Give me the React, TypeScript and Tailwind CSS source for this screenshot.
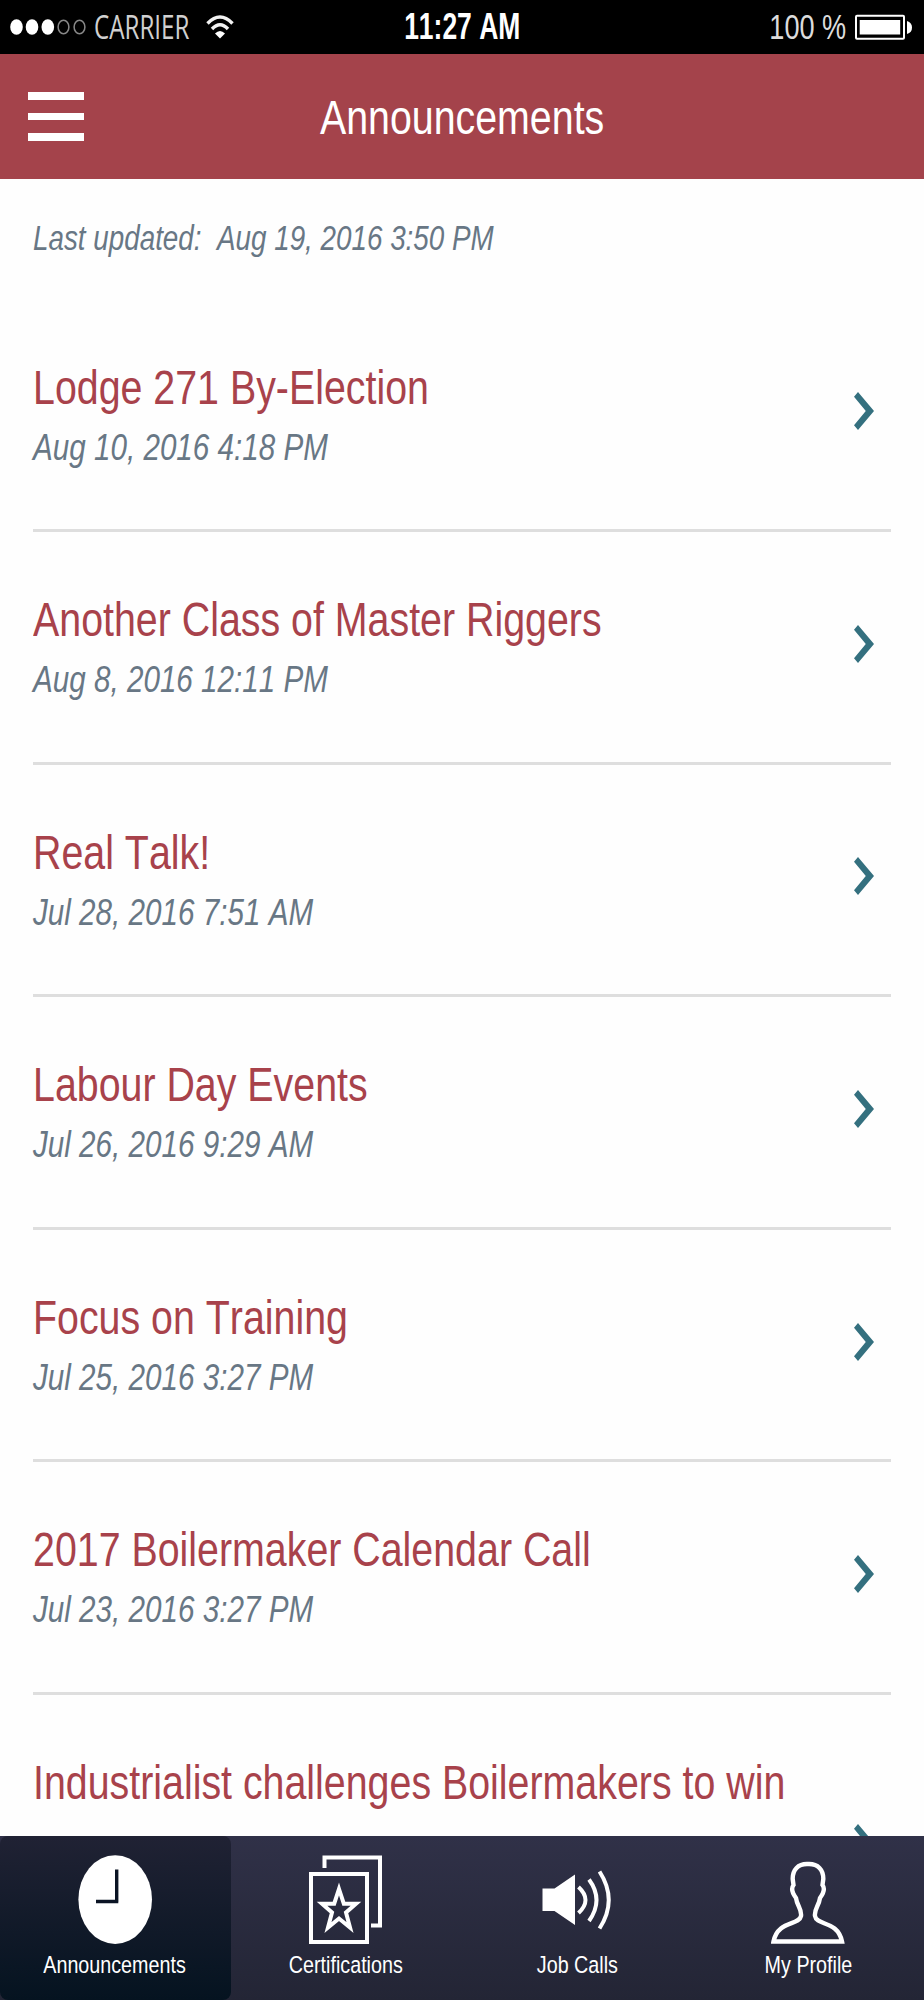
import React from 'react';

interface Announcement {
  title: string;
  date: string;
  multiline?: boolean;
}

const announcements: Announcement[] = [
  { title: 'Lodge 271 By-Election', date: 'Aug 10, 2016 4:18 PM' },
  { title: 'Another Class of Master Riggers', date: 'Aug 8, 2016 12:11 PM' },
  { title: 'Real Talk!', date: 'Jul 28, 2016 7:51 AM' },
  { title: 'Labour Day Events', date: 'Jul 26, 2016 9:29 AM' },
  { title: 'Focus on Training', date: 'Jul 25, 2016 3:27 PM' },
  { title: '2017 Boilermaker Calendar Call', date: 'Jul 23, 2016 3:27 PM' },
  { title: 'Industrialist challenges Boilermakers to win', date: '', multiline: true },
];

const StatusBar: React.FC = () => (
  <div className="h-[54px] shrink-0 bg-black grid grid-cols-3 items-center text-white">
    <div className="flex items-center pl-[10px]">
      <svg width="78" height="20" viewBox="0 0 78 20" className="shrink-0">
        <ellipse cx="6.5" cy="10" rx="6.3" ry="7.8" fill="#fff" />
        <ellipse cx="22" cy="10" rx="6.3" ry="7.8" fill="#fff" />
        <ellipse cx="37.8" cy="10" rx="6.3" ry="7.8" fill="#fff" />
        <ellipse cx="53.5" cy="10" rx="5.4" ry="6.8" fill="none" stroke="#888" strokeWidth="1.5" />
        <ellipse cx="69.5" cy="10" rx="5.4" ry="6.8" fill="none" stroke="#888" strokeWidth="1.5" />
      </svg>
      <div className="w-[112px] ml-[6px]">
        <span className="inline-block whitespace-nowrap origin-left scale-x-[0.755] font-['Open_Sans'] text-[32px] leading-[40px] text-[#d0d0d0]">CARRIER</span>
      </div>
      <svg width="28" height="26" viewBox="0 0 28 26" className="shrink-0" fill="none" stroke="#f2f2f2" strokeWidth="3.4">
        <path d="M1.5 9.5Q14 -3.5 26.5 9.5" />
        <path d="M6 15Q14 6.5 22 15" />
        <path d="M9 19.5Q14 14.5 19 19.5L14 24.5Z" fill="#fff" stroke="none" />
      </svg>
    </div>
    <div className="flex justify-center">
      <span className="whitespace-nowrap scale-x-[0.715] font-bold text-[37px] leading-[44px]">11:27 AM</span>
    </div>
    <div className="flex items-center justify-end pr-[12px]">
      <span className="whitespace-nowrap origin-right scale-x-[0.775] mr-[9px] text-[35px] leading-[44px] text-[#dcdcdc]">100 %</span>
      <svg width="57" height="26" viewBox="0 0 57 26">
        <rect x="1" y="1.7" width="48" height="23" rx="1" fill="none" stroke="#fff" strokeWidth="2" />
        <rect x="4.7" y="6" width="40.5" height="14.5" fill="#fff" />
        <path d="M52 7Q57 8.5 57 13.5Q57 18.5 52 20Z" fill="#fff" />
      </svg>
    </div>
  </div>
);

const Header: React.FC = () => (
  <header className="h-[124.5px] shrink-0 bg-[#a4434b] grid grid-cols-3 items-center">
    <button className="ml-7 w-14 flex flex-col gap-[13px]">
      <span className="h-[7.5px] bg-white" />
      <span className="h-[7.5px] bg-white" />
      <span className="h-[7.5px] bg-white" />
    </button>
    <h1 className="flex justify-center pt-px">
      <span className="whitespace-nowrap scale-x-[0.803] text-white text-[49px] leading-[56px]">Announcements</span>
    </h1>
  </header>
);

const AnnouncementRow: React.FC<{ item: Announcement }> = ({ item }) => (
  <li className={`${item.multiline ? 'h-[304.6px]' : 'h-[232.6px]'} shrink-0 flex border-b-[3px] border-[#dedede]`}>
    <div className="flex-1 w-0 pt-[59px]">
      <h2 className="w-max origin-left scale-x-[0.803] text-[49px] leading-[56px] text-[#a8424b]">{item.title}</h2>
      <p className="w-max mt-[12px] origin-left scale-x-[0.812] italic text-[36.5px] leading-[42px] text-[#687785]">{item.date}</p>
    </div>
    <svg width="20" height="38" viewBox="0 0 20 38" className="self-center shrink-0 mr-[17px] -mt-[6px]">
      <path d="M4 0L20 19L4 38L0 33.2L11.8 19L0 4.8Z" fill="#34707f" />
    </svg>
  </li>
);

const ClockIcon = () => (
  <svg width="76" height="90" viewBox="0 0 76 90">
    <ellipse cx="38.2" cy="44.6" rx="36.8" ry="44.4" fill="#fff" />
    <path d="M39.7 14.5V47M41.3 46.5H19" stroke="#0b1424" strokeWidth="3.4" />
  </svg>
);

const CertificateIcon = () => (
  <svg width="74" height="90" viewBox="0 0 74 90" fill="none" stroke="#fff">
    <path d="M2 19H58V87H2Z" strokeWidth="4" />
    <path d="M15.5 13V2.5H71V70.5H62" strokeWidth="4" />
    <path d="M30 34L34.8 48.7H47L37 57.5L41 72.5L30 63.5L19 72.5L23 57.5L13 48.7H25.2Z" strokeWidth="4" />
  </svg>
);

const SpeakerIcon = () => (
  <svg width="70" height="90" viewBox="0 0 70 90">
    <path d="M0.5 33.5H12.5L33 19.5V70L12.5 56H0.5Z" fill="#fff" />
    <path d="M36.5 32Q50.5 45 36.5 58M47 24.5Q62 45 47 66M57.5 16.5Q76 45 57.5 73.5" fill="none" stroke="#fff" strokeWidth="4" />
  </svg>
);

const ProfileIcon = () => (
  <svg width="74" height="90" viewBox="0 0 74 90" fill="none" stroke="#fff" strokeWidth="4.4">
    <path d="M37 9C27 8.500 21.500 15 21.700 24L22.500 30C19.500 34 22 39 25 43C26 51 31 54 30 61C28 71 7 65 2.500 86.500H71C66.500 65 45.500 71 44 61C43 54 48 51 49 43C52 39 54.500 34 51.500 30L52.300 24C52.500 15 47 8.500 37 9Z" />
  </svg>
);

const tabs = [
  { label: 'Announcements', icon: <ClockIcon /> },
  { label: 'Certifications', icon: <CertificateIcon /> },
  { label: 'Job Calls', icon: <SpeakerIcon /> },
  { label: 'My Profile', icon: <ProfileIcon /> },
];

const TabBar: React.FC = () => (
  <nav className="h-[164px] shrink-0 grid grid-cols-4 bg-linear-to-b from-[#303148] to-[#232535]">
    {tabs.map((tab, index) => (
      <button
        key={tab.label}
        className={`flex flex-col items-center pt-[19px] pr-px ${index === 0 ? 'rounded-lg bg-linear-to-b from-[#202234] to-[#051320]' : ''}`}
      >
        {tab.icon}
        <span className="mt-[6px] whitespace-nowrap scale-x-[0.805] text-white text-[24.5px] leading-[28px]">{tab.label}</span>
      </button>
    ))}
  </nav>
);

const App: React.FC = () => {
  return (
    <div className="w-[924px] h-[2000px] flex flex-col overflow-hidden bg-white font-['Liberation_Sans',sans-serif] [font-kerning:none]">
      <StatusBar />
      <Header />
      <main className="flex-1 min-h-0 overflow-hidden flex flex-col px-[33px] bg-[#fefefe]">
        <p className="h-[121px] shrink-0 pt-[39px] whitespace-pre origin-left scale-x-[0.806] italic text-[34.5px] leading-[40px] text-[#687785]">{'Last updated:  Aug 19, 2016 3:50 PM'}</p>
        <ul className="flex flex-col">
          {announcements.map((item) => (
            <AnnouncementRow key={item.title} item={item} />
          ))}
        </ul>
      </main>
      <TabBar />
    </div>
  );
};

export default App;
